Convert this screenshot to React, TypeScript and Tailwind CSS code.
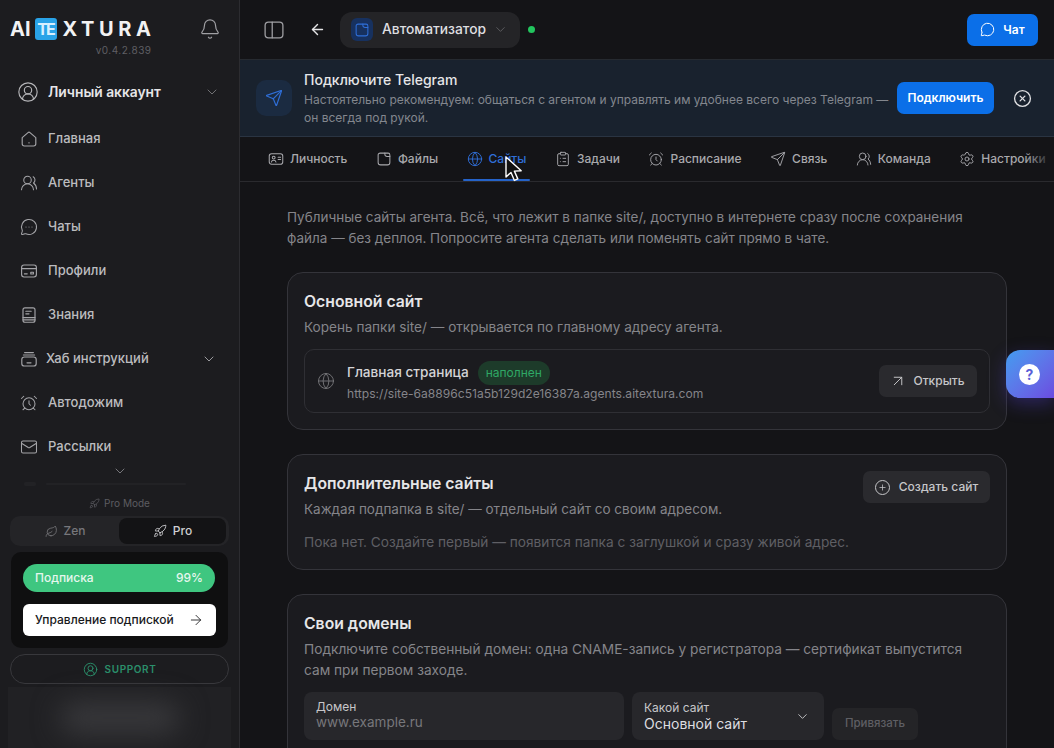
import React from 'react';
import {
  AlarmClock, ArrowLeft, ArrowRight, ArrowUpRight, Bell, ChevronDown, CircleUserRound, CircleX,
  ClipboardList, Globe, Mail, MessageCircle, MessageCircleMore, Plus,
  Rocket, Send, Settings, UsersRound, Leaf,
} from 'lucide-react';

const FONT = "font-['Inter','Noto_Sans',sans-serif]";

type IconProps = { className?: string; size?: number; strokeWidth?: number };

const Line = ({ size = 18, className = '', children }: IconProps & { children: React.ReactNode }) => (
  <svg viewBox="0 0 18 18" width={size} height={size} fill="none" stroke="currentColor" strokeWidth="1.15" strokeLinecap="round" strokeLinejoin="round" className={`shrink-0 ${className}`}>
    {children}
  </svg>
);

const FileIcon = (p: IconProps) => (
  <Line {...p}>
    <path d="M4.6 2.4h9a2 2 0 0 1 2 2v8.4a2.8 2.8 0 0 1-2.8 2.8H5.2a2.8 2.8 0 0 1-2.8-2.8V4.6a2.2 2.2 0 0 1 2.2-2.2Z" />
    <path d="M10 2.4v1.4a2.4 2.4 0 0 0 2.4 2.4h3.2" />
  </Line>
);

const HomeIcon = (p: IconProps) => (
  <Line {...p}>
    <path d="M2.2 7.6 8 2.6a1.6 1.6 0 0 1 2 0l5.8 5v6.2a2.2 2.2 0 0 1-2.2 2.2H4.4a2.2 2.2 0 0 1-2.2-2.2Z" />
    <path d="M9 12.6v.3" />
  </Line>
);

const CardIcon = (p: IconProps) => (
  <Line {...p}>
    <rect x="1.6" y="3" width="14.8" height="12" rx="2.4" />
    <path d="M1.6 6.6h14.8M4.4 11.8h2.8M10.8 10.2h2.6v1.8h-2.6Z" />
  </Line>
);

const BookIcon = (p: IconProps) => (
  <Line {...p}>
    <rect x="3" y="1.8" width="12" height="14.4" rx="2" />
    <path d="M5.8 5.2h5.4M5.8 7.8h3.2M3 11.6h12M3 13.8h12" />
  </Line>
);

const HubIcon = (p: IconProps) => (
  <Line {...p}>
    <path d="M4.6 2.6h8.8M3.4 5h11.2" />
    <rect x="1.8" y="7" width="14.4" height="9" rx="2.6" />
    <path d="M7 12.8h4" />
  </Line>
);

const ContactIcon = (p: IconProps) => (
  <Line {...p}>
    <rect x="1.4" y="3" width="15.2" height="12" rx="2.6" />
    <circle cx="6.4" cy="7.4" r="1.6" />
    <path d="M3.8 12.4c.3-1.4 1.3-2 2.6-2s2.3.6 2.6 2M11.4 7h2.8M11.4 9.6h2.8" />
  </Line>
);

const PanelIcon = (p: IconProps) => (
  <Line {...p}>
    <rect x="1" y="2" width="16" height="14" rx="3" />
    <path d="M7.4 2v14" />
  </Line>
);

const navItems = [
  { label: 'Главная', icon: HomeIcon },
  { label: 'Агенты', icon: UsersRound },
  { label: 'Чаты', icon: MessageCircleMore },
  { label: 'Профили', icon: CardIcon },
  { label: 'Знания', icon: BookIcon },
  { label: 'Хаб инструкций', icon: HubIcon, hasChevron: true },
  { label: 'Автодожим', icon: AlarmClock },
  { label: 'Рассылки', icon: Mail },
];

const tabs = [
  { label: 'Личность', icon: ContactIcon },
  { label: 'Файлы', icon: FileIcon },
  { label: 'Сайты', icon: Globe, active: true },
  { label: 'Задачи', icon: ClipboardList },
  { label: 'Расписание', icon: AlarmClock },
  { label: 'Связь', icon: Send },
  { label: 'Команда', icon: UsersRound },
  { label: 'Настройки', icon: Settings },
];

const Sidebar = () => (
  <aside className="relative flex w-[240px] h-[748px] shrink-0 flex-col overflow-hidden border-r border-[#2c2c30] bg-[#1c1c1f]">
    {/* Logo */}
    <div className="flex h-[70px] shrink-0 items-start justify-between pl-[10px] pr-[18px] pt-[18px]">
      <div className="flex flex-col items-end">
        <div className="flex items-center text-[20px] font-bold leading-[22px] text-[#f2f2f3]">
          <span>AI</span>
          <span className="ml-[4px] mr-[6px] flex h-[22px] w-[22px] items-center justify-center rounded-[3px] bg-[#29a3e8] text-[16px] font-bold tracking-[-2px] text-[#d8f0ff]">TE</span>
          <span className="-mr-[4px] tracking-[4.6px]">XTURA</span>
        </div>
        <span className="mt-[4px] text-[10px] leading-[12px] tracking-[0.5px] text-[#5f5f64]">v0.4.2.839</span>
      </div>
      <Bell size={22} strokeWidth={1.3} className="text-[#a0a0a4]" />
    </div>

    {/* Account */}
    <div className="flex h-[44px] shrink-0 items-center pl-[17px] pr-[19px]">
      <CircleUserRound size={22} strokeWidth={1.25} className="text-[#b5b5b8]" />
      <span className="ml-[9px] flex-1 text-[13.8px] font-semibold text-[#e6e6e8]">Личный аккаунт</span>
      <ChevronDown size={16} strokeWidth={1.4} className="text-[#77777b]" />
    </div>

    {/* Nav */}
    <nav className="flex shrink-0 flex-col pt-[3px]">
      {navItems.map(({ label, icon: Icon, hasChevron }) => (
        <div key={label} className="flex h-[44px] items-center pl-[20px] pr-[22px]">
          <Icon size={18} strokeWidth={1.4} className="shrink-0 text-[#a4a4a8]" />
          <span className={`${hasChevron ? 'ml-[8px]' : 'ml-[10px]'} flex-1 text-[13px] font-medium text-[#bcbcbf]`}>{label}</span>
          {hasChevron && <ChevronDown size={16} strokeWidth={1.4} className="text-[#a4a4a8]" />}
        </div>
      ))}
    </nav>

    <div className="-mt-[6px] flex h-[10px] shrink-0 justify-center">
      <ChevronDown size={16} strokeWidth={1.5} className="text-[#77777b]" />
    </div>

    {/* Row fading out under the scroll edge */}
    <div className="mt-[8px] flex h-[6px] shrink-0 items-center gap-[10px] pl-[24px] opacity-40">
      <span className="h-[4px] w-[12px] rounded-full bg-[#2d2d30]" />
      <span className="h-[2px] w-[140px] rounded-full bg-[#2d2d30]" />
    </div>

    {/* Mode */}
    <div className="mt-[9px] flex h-[14px] shrink-0 items-center justify-center gap-[4px] text-[10px] text-[#5c5c61]">
      <Rocket size={11} strokeWidth={1.5} />
      <span>Pro Mode</span>
    </div>
    <div className="mx-[10px] mt-[6px] flex h-[30px] shrink-0 items-center rounded-[10px] bg-[#242427] p-[1px]">
      <div className="flex flex-1 items-center justify-center gap-[6px] text-[12px] font-medium text-[#77777b]">
        <Leaf size={13} strokeWidth={1.5} />
        <span>Zen</span>
      </div>
      <div className="mr-[2px] flex h-[26px] w-[107px] items-center justify-center gap-[6px] rounded-[8px] bg-[#131315] text-[12px] font-medium text-[#cfcfd2]">
        <Rocket size={14} strokeWidth={1.5} />
        <span>Pro</span>
      </div>
    </div>

    {/* Subscription */}
    <div className="mx-[11px] mt-[6px] flex h-[96px] shrink-0 flex-col gap-[12px] rounded-[10px] bg-[#0f0f10] p-[12px]">
      <div className="flex h-[28px] w-[192px] items-center justify-between rounded-[14px] bg-[#3fc680] px-[12px] text-[12px] font-medium text-[#e6f7ee]">
        <span>Подписка</span>
        <span>99%</span>
      </div>
      <div className="flex h-[32px] w-[193px] items-center justify-between rounded-[6px] bg-white pl-[12px] pr-[12px] text-[12px] font-medium text-[#18181b]">
        <span>Управление подпиской</span>
        <ArrowRight size={16} strokeWidth={1.3} />
      </div>
    </div>

    {/* Support */}
    <div className="mx-[10px] mt-[6px] flex h-[30px] shrink-0 items-center justify-center gap-[7px] rounded-[15px] border border-[#38383c] text-[10px] font-semibold tracking-[0.6px] text-[#2b8f6b]">
      <CircleUserRound size={15} strokeWidth={1.5} />
      <span>SUPPORT</span>
    </div>

    {/* Blurred profile */}
    <div className="mx-[8px] mt-[3px] flex flex-1 items-center justify-center bg-[#212124]">
      <div className="h-[30px] w-[120px] rounded-full bg-[#3a3a3d] blur-[14px]" />
    </div>
  </aside>
);

const Header = () => (
  <header className="flex h-[60px] shrink-0 items-center border-b border-[#262a30] pl-[24px] pr-[16px]">
    <PanelIcon size={20} className="text-[#a0a0a4]" />
    <ArrowLeft size={17} strokeWidth={2} className="ml-[25px] text-[#e4e4e6]" />
    <div className="ml-[14px] flex h-[36px] w-[180px] items-center rounded-[12px] bg-[#242427] pl-[11px]">
      <div className="flex h-[23px] w-[22px] items-center justify-center rounded-[6px] bg-[#17315f]">
        <FileIcon size={16} className="text-[#2f6fd8]" />
      </div>
      <span className="ml-[9px] text-[13.8px] font-medium text-[#dedee0]">Автоматизатор</span>
      <ChevronDown size={15} strokeWidth={1.3} className="ml-[7px] text-[#66666a]" />
    </div>
    <span className="ml-[8px] h-[7px] w-[7px] rounded-full bg-[#22c55e]" />
    <button className="ml-auto flex h-[32px] w-[71px] items-center justify-center gap-[8px] rounded-[7px] bg-[#0b6fe8] text-[12px] font-semibold text-white">
      <MessageCircle size={15} strokeWidth={1.6} />
      <span>Чат</span>
    </button>
  </header>
);

const TelegramBanner = () => (
  <div className="flex h-[77px] shrink-0 items-center border-b border-[#2a3442] bg-[#19222e] pl-[16px] pr-[22px]">
    <div className="flex h-[36px] w-[36px] shrink-0 items-center justify-center rounded-[10px] bg-[#1b2b41]">
      <Send size={18} strokeWidth={1.5} className="text-[#2f6fd8]" />
    </div>
    <div className="ml-[12px] w-[585px] shrink-0">
      <div className="text-[14px] font-medium leading-[19px] text-[#e6e6e8]">Подключите Telegram</div>
      <p className="mt-[2px] text-[12px] leading-[18px] text-[#83878e]">
        Настоятельно рекомендуем: общаться с агентом и управлять им удобнее всего через Telegram — он всегда под рукой.
      </p>
    </div>
    <button className="ml-[8px] flex h-[32px] w-[97px] shrink-0 items-center justify-center rounded-[7px] bg-[#0b6fe8] text-[12px] font-semibold text-white">
      Подключить
    </button>
    <CircleX size={19} strokeWidth={1.7} className="ml-auto text-[#e0e0e2]" />
  </div>
);

const Tabs = () => (
  <div className="relative flex h-[45px] shrink-0 items-stretch gap-[20.5px] overflow-hidden border-b border-[#2a2a2e] pl-[24px]">
    {tabs.map(({ label, icon: Icon, active }) => (
      <div key={label} className={`relative flex shrink-0 items-center gap-[6px] px-[4px] text-[12px] font-medium ${active ? 'text-[#2f6fd8]' : 'text-[#a9a9ad]'}`}>
        <Icon size={16} strokeWidth={1.4} className="shrink-0" />
        <span>{label}</span>
        {active && <span className="absolute bottom-0 left-0 right-0 h-[2px] rounded-full bg-[#2563c9]" />}
      </div>
    ))}
    <div className="absolute bottom-0 right-0 top-0 w-[30px] bg-gradient-to-r from-transparent to-[#141417]" />
  </div>
);

const Card = ({ children, className = '' }: { children: React.ReactNode; className?: string }) => (
  <section className={`rounded-[16px] border border-[#34343a] bg-[#1b1b1f] px-[16px] ${className}`}>{children}</section>
);

const Content = () => (
  <div className="flex-1 overflow-hidden pl-[47px] pr-[47px] pt-[25px]">
    <p className="pr-[10px] text-[13.5px] leading-[21px] text-[#85858a]">
      Публичные сайты агента. Всё, что лежит в папке site/, доступно в интернете сразу после сохранения файла — без деплоя. Попросите агента сделать или поменять сайт прямо в чате.
    </p>

    <Card className="mt-[23px] h-[158px] pt-[18px]">
      <h3 className="text-[15.75px] font-semibold leading-[21px] text-[#e6e6e8]">Основной сайт</h3>
      <p className="mt-[5px] text-[13.6px] leading-[20px] text-[#85858a]">Корень папки site/ — открывается по главному адресу агента.</p>
      <div className="mt-[12px] flex h-[64px] items-center rounded-[10px] border border-[#2f2f34] pl-[12px] pr-[12px]">
        <Globe size={18} strokeWidth={1.2} className="text-[#77777b]" />
        <div className="ml-[12px] flex-1">
          <div className="flex items-center">
            <span className="text-[13.6px] font-medium text-[#d4d4d7]">Главная страница</span>
            <span className="ml-[9px] flex h-[24px] items-center rounded-full bg-[#1d3b2a] px-[8px] text-[12px] text-[#2fa866]">наполнен</span>
          </div>
          <div className="text-[12.1px] leading-[17px] text-[#85858a]">https://site-6a8896c51a5b129d2e16387a.agents.aitextura.com</div>
        </div>
        <button className="flex h-[32px] w-[98px] items-center justify-center gap-[6px] pr-[2px] rounded-[7px] bg-[#2a2a2e] text-[12px] font-medium text-[#c6c6c9]">
          <ArrowUpRight size={18} strokeWidth={1.3} />
          <span>Открыть</span>
        </button>
      </div>
    </Card>

    <Card className="mt-[24px] h-[116px] pt-[16px]">
      <div className="flex items-start justify-between">
        <div className="pt-[2px]">
          <h3 className="text-[15.75px] font-semibold leading-[21px] text-[#e6e6e8]">Дополнительные сайты</h3>
          <p className="mt-[5px] text-[13.5px] leading-[20px] text-[#85858a]">Каждая подпапка в site/ — отдельный сайт со своим адресом.</p>
        </div>
        <button className="flex h-[32px] w-[127px] items-center justify-center gap-[9px] rounded-[7px] bg-[#2a2a2e] text-[12px] font-medium text-[#c6c6c9]">
          <span className="flex h-[15px] w-[15px] items-center justify-center rounded-full border border-[#c6c6c9]">
            <Plus size={9} strokeWidth={2} />
          </span>
          <span>Создать сайт</span>
        </button>
      </div>
      <p className="mt-[13px] text-[13.7px] leading-[20px] text-[#5f5f64]">Пока нет. Создайте первый — появится папка с заглушкой и сразу живой адрес.</p>
    </Card>

    <Card className="mt-[24px] h-[180px] pt-[18px]">
      <h3 className="text-[15.75px] font-semibold leading-[21px] text-[#e6e6e8]">Свои домены</h3>
      <p className="mt-[5px] pr-[10px] text-[13.7px] leading-[21px] text-[#85858a]">
        Подключите собственный домен: одна CNAME-запись у регистратора — сертификат выпустится сам при первом заходе.
      </p>
      <div className="mt-[11px] flex items-end">
        <div className="h-[48px] w-[320px] rounded-[8px] bg-[#27272b] px-[12px] pt-[7px]">
          <div className="text-[12px] leading-[15px] text-[#c6c6c9]">Домен</div>
          <div className="text-[13.5px] leading-[16px] text-[#77777b]">www.example.ru</div>
        </div>
        <div className="ml-[8px] flex h-[48px] w-[192px] items-center justify-between rounded-[8px] bg-[#27272b] pl-[12px] pr-[14px]">
          <div>
            <div className="text-[12px] leading-[15px] text-[#c6c6c9]">Какой сайт</div>
            <div className="text-[14px] leading-[18px] text-[#dedee0]">Основной сайт</div>
          </div>
          <ChevronDown size={15} strokeWidth={1.5} className="text-[#c6c6c9]" />
        </div>
        <button className="ml-[8px] h-[32px] w-[86px] rounded-[7px] bg-[#242427] text-[11.5px] font-medium text-[#5f5f64]">Привязать</button>
      </div>
    </Card>
  </div>
);

export default function App() {
  return (
    <div className={`${FONT} relative flex h-[748px] w-[1054px] overflow-hidden bg-[#141417]`}>
      <Sidebar />
      <main className="flex min-w-0 flex-1 flex-col">
        <Header />
        <TelegramBanner />
        <Tabs />
        <Content />
      </main>

      {/* Help bubble */}
      <div className="absolute right-0 top-[350px] flex h-[48px] w-[48px] items-center rounded-l-[14px] bg-gradient-to-br from-[#3f9cf0] to-[#6a4be0] pl-[13px] shadow-[0_6px_18px_rgba(90,70,220,0.35)]">
        <span className="flex h-[21px] w-[21px] items-center justify-center rounded-full bg-white text-[14px] font-bold text-[#5a5fd8]">?</span>
      </div>

      {/* Mouse cursor */}
      <svg viewBox="0 0 18 26" className="absolute left-[505px] top-[156px] h-[26px] w-[18px]">
        <path d="M1 1v20l5-4.6 3.4 8 3.4-1.5-3.4-7.8 6.8-.3Z" fill="#111" stroke="#fff" strokeWidth="1.4" strokeLinejoin="round" />
      </svg>
    </div>
  );
}
